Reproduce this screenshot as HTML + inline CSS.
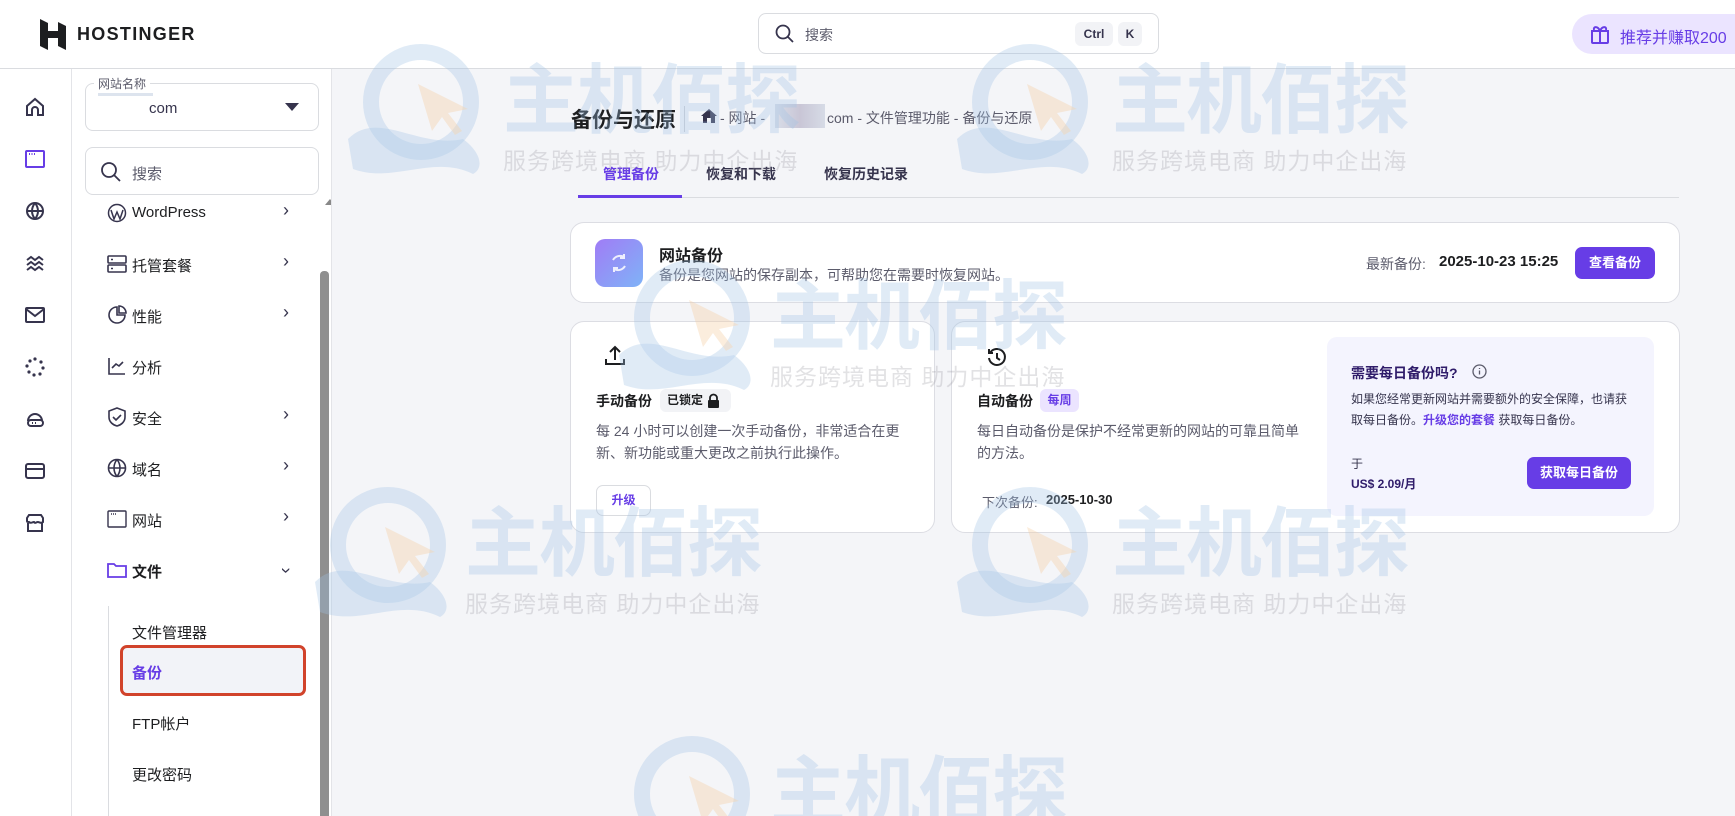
<!DOCTYPE html>
<html><head><meta charset="utf-8">
<style>
*{box-sizing:border-box;margin:0;padding:0}
html{width:1735px;height:816px;overflow:hidden;background:#f4f5f8}
body{width:1735px;height:816px;overflow:hidden;background:#f4f5f8;font-family:"Liberation Sans","Noto Sans CJK SC",sans-serif;color:#1d1e20;position:relative}
.abs{position:absolute}
.hdr{left:0;top:0;width:1735px;height:69px;background:#fff;border-bottom:1px solid #dadce0}
.rail{left:0;top:69px;width:72px;height:747px;background:#fff;border-right:1px solid #e3e4e8}
.panel{left:72px;top:69px;width:260px;height:747px;background:#fff;border-right:1px solid #e3e4e8;overflow:hidden}
.ri{position:absolute;left:22px;width:26px;height:26px}
.row{position:absolute;left:35px;width:220px;height:40px;font-size:15px;color:#1d1e20}
.row svg{position:absolute;left:0;top:9px}
.row .t{position:absolute;left:25px;top:10px}
.row .c{position:absolute;right:38px;top:6px;font-size:18px;color:#36344d}
.sub{position:absolute;left:60px;font-size:15px;color:#1d1e20}
.card{background:#fff;border:1px solid #dcdde3;border-radius:14px}
.g{color:#5b5b6b}
.btn{background:#673de6;color:#fff;font-weight:bold;font-size:13px;border-radius:7px;text-align:center}
.wmc{position:absolute;left:0;top:0;width:1735px;height:816px;overflow:hidden;pointer-events:none}
.wm{position:absolute;pointer-events:none;opacity:.8}
.wm .big{position:absolute;font-size:76px;font-weight:bold;color:rgba(160,195,230,.4);letter-spacing:-2px;white-space:nowrap;line-height:1}
.wm .sm{position:absolute;font-size:23px;color:rgba(140,140,150,.32);white-space:nowrap;letter-spacing:1px}
</style></head><body>

<div class="abs hdr"></div>
<svg class="abs" style="left:40px;top:19px" width="26" height="31" viewBox="0 0 26 31"><path d="M0 0l8 4v8l10 0V3l8 4v9H8l-8 0z" fill="#1d1e20"/><path d="M0 14l18 0v0l8 0v17l-8-4v-8H8v12l-8-4z" fill="#1d1e20"/></svg>
<div class="abs" style="left:77px;top:24px;font-size:18px;font-weight:bold;letter-spacing:1.3px;color:#1d1e20">HOSTINGER</div>
<div class="abs" style="left:758px;top:13px;width:401px;height:41px;border:1px solid #dadce0;border-radius:8px;background:#fff"></div>
<svg class="abs" style="left:775px;top:24px" width="20" height="20" viewBox="0 0 20 20"><circle cx="8" cy="8" r="6.5" fill="none" stroke="#36344d" stroke-width="1.8"/><path d="M13 13l5 5" stroke="#36344d" stroke-width="1.8"/></svg>
<div class="abs g" style="left:805px;top:25px;font-size:14px">搜索</div>
<div class="abs" style="left:1075px;top:22px;width:38px;height:24px;background:#f2f3f6;border-radius:6px;font-size:12px;font-weight:bold;text-align:center;line-height:24px;color:#36344d">Ctrl</div>
<div class="abs" style="left:1118px;top:22px;width:24px;height:24px;background:#f2f3f6;border-radius:6px;font-size:12px;font-weight:bold;text-align:center;line-height:24px;color:#36344d">K</div>
<div class="abs" style="left:1572px;top:14px;width:163px;height:40px;background:#ebe4ff;border-radius:20px 0 0 20px"></div>
<svg class="abs" style="left:1589px;top:23px" width="22" height="22" viewBox="0 0 22 22" fill="none" stroke="#673de6" stroke-width="2"><rect x="3" y="8" width="16" height="12" rx="1"/><path d="M2 8h18M11 8v12M11 8c-2-5-7-5-6-1M11 8c2-5 7-5 6-1"/></svg>
<div class="abs" style="left:1620px;top:24px;font-size:16px;color:#673de6;white-space:nowrap">推荐并赚取200</div>

<div class="abs rail">
<svg class="ri" style="top:25px" viewBox="0 0 26 26" fill="none" stroke="#36344d" stroke-width="2"><path d="M5 12l8-7 8 7v9H16v-5a3 3 0 0 0-6 0v5H5z"/></svg>
<svg class="ri" style="top:77px" viewBox="0 0 26 26" fill="none" stroke="#673de6" stroke-width="2"><rect x="4" y="5" width="18" height="16" rx="1"/><path d="M7 8h1M9.5 8h1M12 8h1"/></svg>
<svg class="ri" style="top:129px" viewBox="0 0 26 26" fill="none" stroke="#36344d" stroke-width="2"><circle cx="13" cy="13" r="8"/><path d="M5 13h16M13 5c-4 5-4 11 0 16M13 5c4 5 4 11 0 16"/></svg>
<svg class="ri" style="top:181px" viewBox="0 0 26 26" fill="none" stroke="#36344d" stroke-width="2"><path d="M5 10l4-3 4 3 4-3 4 3M5 15l4-3 4 3 4-3 4 3M5 20l4-3 4 3 4-3 4 3"/></svg>
<svg class="ri" style="top:233px" viewBox="0 0 26 26" fill="none" stroke="#36344d" stroke-width="2"><rect x="4" y="6" width="18" height="14" rx="1"/><path d="M4 7l9 7 9-7"/></svg>
<svg class="ri" style="top:285px" viewBox="0 0 26 26" fill="#36344d"><circle cx="13" cy="5" r="1.6"/><circle cx="19" cy="8" r="1.6"/><circle cx="21" cy="14" r="1.6"/><circle cx="18" cy="20" r="1.6"/><circle cx="12" cy="21" r="1.6"/><circle cx="7" cy="18" r="1.6"/><circle cx="5" cy="12" r="1.6"/><circle cx="8" cy="7" r="1.6"/></svg>
<svg class="ri" style="top:337px" viewBox="0 0 26 26" fill="none" stroke="#36344d" stroke-width="2"><path d="M6 15a7 7 0 0 1 14 0"/><rect x="6" y="14" width="15" height="6" rx="3"/><path d="M10 17h1M13 17h1"/></svg>
<svg class="ri" style="top:389px" viewBox="0 0 26 26" fill="none" stroke="#36344d" stroke-width="2"><rect x="4" y="6" width="18" height="14" rx="2"/><path d="M4 11h18"/></svg>
<svg class="ri" style="top:441px" viewBox="0 0 26 26" fill="none" stroke="#36344d" stroke-width="2"><path d="M5 8l2-3h12l2 3v4c-2 2-4 0-5 0-2 0-3 2-4 0-2 0-3 2-5 0-2 0-2 0-2-1zM6 13v8h14v-8"/></svg>
</div>

<div class="abs panel">
  <div class="abs" style="left:13px;top:14px;width:234px;height:48px;border:1px solid #dadce0;border-radius:8px"></div>
  <div class="abs g" style="left:22px;top:6px;font-size:12px;background:#fff;padding:0 4px">网站名称</div>
  <div class="abs" style="left:26px;top:24px;width:55px;height:3px;background:#dde4ee"></div>
  <div class="abs" style="left:77px;top:31px;font-size:15px;color:#36344d">com</div>
  <div class="abs" style="left:213px;top:34px;width:0;height:0;border-left:7px solid transparent;border-right:7px solid transparent;border-top:8px solid #36344d"></div>
  <div class="abs" style="left:13px;top:78px;width:234px;height:48px;border:1px solid #dadce0;border-radius:8px"></div>
  <svg class="abs" style="left:28px;top:92px" width="22" height="22" viewBox="0 0 22 22"><circle cx="9" cy="9" r="7" fill="none" stroke="#36344d" stroke-width="1.8"/><path d="M14 14l6 6" stroke="#36344d" stroke-width="1.8"/></svg>
  <div class="abs g" style="left:60px;top:94px;font-size:15px">搜索</div>
  <div class="abs" style="left:253px;top:130px;width:0;height:0;border-left:5px solid transparent;border-right:5px solid transparent;border-bottom:6px solid #888"></div>
  <div class="abs" style="left:248px;top:202px;width:9px;height:545px;background:#8f8f8f;border-radius:4px 4px 0 0"></div>

  <div class="row" style="top:125px"><svg width="20" height="20" viewBox="0 0 20 20" fill="none" stroke="#36344d" stroke-width="1.5"><circle cx="10" cy="10" r="8.5"/><path d="M4 7l3 9 3-7 3 7 3-9"/></svg><span class="t">WordPress</span><span class="c">›</span></div>
  <div class="row" style="top:176px"><svg width="20" height="20" viewBox="0 0 20 20" fill="none" stroke="#36344d" stroke-width="1.6"><rect x="1" y="2" width="18" height="7" rx="1"/><rect x="1" y="11" width="18" height="7" rx="1"/><path d="M4 5.5h2M4 14.5h2"/></svg><span class="t">托管套餐</span><span class="c">›</span></div>
  <div class="row" style="top:227px"><svg width="20" height="20" viewBox="0 0 20 20" fill="none" stroke="#36344d" stroke-width="1.6"><path d="M10 2a8 8 0 1 0 8 8h-8z"/><path d="M12 1a7 7 0 0 1 7 7h-7z"/></svg><span class="t">性能</span><span class="c">›</span></div>
  <div class="row" style="top:278px"><svg width="20" height="20" viewBox="0 0 20 20" fill="none" stroke="#36344d" stroke-width="1.6"><path d="M2 2v16h16M5 12l4-4 3 2 4-4"/></svg><span class="t">分析</span></div>
  <div class="row" style="top:329px"><svg width="20" height="20" viewBox="0 0 20 20" fill="none" stroke="#36344d" stroke-width="1.6"><path d="M10 1l8 3v6c0 5-4 8-8 9-4-1-8-4-8-9V4z"/><path d="M6 10l3 3 5-5"/></svg><span class="t">安全</span><span class="c">›</span></div>
  <div class="row" style="top:380px"><svg width="20" height="20" viewBox="0 0 20 20" fill="none" stroke="#36344d" stroke-width="1.6"><circle cx="10" cy="10" r="8.5"/><path d="M1.5 10h17M10 1.5c-4 5-4 12 0 17M10 1.5c4 5 4 12 0 17"/></svg><span class="t">域名</span><span class="c">›</span></div>
  <div class="row" style="top:431px"><svg width="20" height="20" viewBox="0 0 20 20" fill="none" stroke="#36344d" stroke-width="1.4"><rect x="1" y="2" width="18" height="16" rx="1"/><path d="M4 5h1M6 5h1M8 5h1"/></svg><span class="t">网站</span><span class="c">›</span></div>
  <div class="row" style="top:482px"><svg width="20" height="20" viewBox="0 0 20 20" fill="none" stroke="#673de6" stroke-width="1.8"><path d="M1 4h6l2 2h10v11H1z"/></svg><span class="t" style="font-weight:bold">文件</span><span class="c" style="transform:rotate(90deg);top:9px">›</span></div>
  <div class="abs" style="left:36px;top:537px;width:1px;height:210px;background:#dadce0"></div>
  <div class="sub" style="top:553px">文件管理器</div>
  <div class="abs" style="left:48px;top:576px;width:186px;height:51px;border:3px solid #d1432b;border-radius:7px;background:#f2f3f8"></div>
  <div class="sub" style="top:593px;color:#673de6;font-weight:bold">备份</div>
  <div class="sub" style="top:644px">FTP帐户</div>
  <div class="sub" style="top:695px">更改密码</div>
</div>

<div class="abs" style="left:571px;top:104px;font-size:21px;font-weight:bold">备份与还原</div>
<div class="abs" style="left:684px;top:106px;width:1px;height:26px;background:#cfd0d6"></div>
<svg class="abs" style="left:701px;top:109px" width="16" height="14" viewBox="0 0 16 14"><path d="M8 0l8 7h-2v7H10V9H6v5H2V7H0z" fill="#36344d"/></svg>
<div class="abs g" style="left:720px;top:108px;font-size:14px;white-space:nowrap">- 网站 -</div>
<div class="abs" style="left:775px;top:104px;width:50px;height:24px;background:linear-gradient(90deg,#d8dde8,#c9c6d6 50%,#d6dbe6)"></div>
<div class="abs g" style="left:827px;top:108px;font-size:14px;white-space:nowrap">com - 文件管理功能 - 备份与还原</div>

<div class="abs" style="left:603px;top:164px;font-size:14px;font-weight:bold;color:#673de6">管理备份</div>
<div class="abs" style="left:706px;top:164px;font-size:14px;font-weight:bold;color:#36344d">恢复和下载</div>
<div class="abs" style="left:824px;top:164px;font-size:14px;font-weight:bold;color:#36344d">恢复历史记录</div>
<div class="abs" style="left:578px;top:197px;width:1101px;height:1px;background:#dadce0"></div>
<div class="abs" style="left:578px;top:195px;width:104px;height:3px;background:#673de6"></div>

<div class="abs card" style="left:570px;top:222px;width:1110px;height:81px"></div>
<div class="abs" style="left:595px;top:239px;width:48px;height:48px;border-radius:10px;background:linear-gradient(135deg,#a07cf6,#7fb3f7)"></div>
<svg class="abs" style="left:607px;top:251px" width="24" height="24" viewBox="0 0 24 24" fill="none" stroke="#fff" stroke-width="2" opacity=".85"><path d="M17 6a8 8 0 0 0-11 3M7 18a8 8 0 0 0 11-3M17 3v4h-4M7 21v-4h4"/></svg>
<div class="abs" style="left:659px;top:242px;font-size:16px;font-weight:bold">网站备份</div>
<div class="abs g" style="left:659px;top:265px;font-size:14px">备份是您网站的保存副本，可帮助您在需要时恢复网站。</div>
<div class="abs g" style="left:1366px;top:254px;font-size:14px">最新备份:</div>
<div class="abs" style="left:1439px;top:253px;font-size:15px;font-weight:bold">2025-10-23 15:25</div>
<div class="abs btn" style="left:1575px;top:247px;width:80px;height:32px;line-height:32px">查看备份</div>

<div class="abs card" style="left:570px;top:321px;width:365px;height:212px"></div>
<svg class="abs" style="left:603px;top:344px" width="24" height="24" viewBox="0 0 24 24" fill="none" stroke="#1d1e20" stroke-width="2"><path d="M12 16V3M7 8l5-5 5 5M3 15v5h18v-5"/></svg>
<div class="abs" style="left:596px;top:391px;font-size:14px;font-weight:bold">手动备份</div>
<div class="abs" style="left:660px;top:389px;width:71px;height:23px;background:#f2f3f6;border-radius:6px;font-size:12px;font-weight:bold;line-height:23px;padding-left:7px">已锁定</div>
<svg class="abs" style="left:707px;top:393px" width="13" height="15" viewBox="0 0 13 15"><path d="M3 7V5a3.5 3.5 0 0 1 7 0v2" fill="none" stroke="#1d1e20" stroke-width="1.8"/><rect x="1" y="7" width="11" height="8" rx="1" fill="#1d1e20"/></svg>
<div class="abs g" style="left:596px;top:420px;width:320px;font-size:14px;line-height:22px">每 24 小时可以创建一次手动备份，非常适合在更新、新功能或重大更改之前执行此操作。</div>
<div class="abs" style="left:596px;top:485px;width:55px;height:31px;border:1px solid #dadce0;border-radius:7px;font-size:12px;font-weight:bold;color:#673de6;text-align:center;line-height:29px">升级</div>

<div class="abs card" style="left:951px;top:321px;width:729px;height:212px"></div>
<svg class="abs" style="left:985px;top:345px" width="24" height="24" viewBox="0 0 24 24" fill="none" stroke="#1d1e20" stroke-width="2"><path d="M5 8a8 8 0 1 1-1 5M4 4v4h4M12 8v5l3 2"/></svg>
<div class="abs" style="left:977px;top:391px;font-size:14px;font-weight:bold">自动备份</div>
<div class="abs" style="left:1040px;top:389px;width:39px;height:23px;background:#ebe4ff;border-radius:6px;font-size:12px;font-weight:bold;color:#673de6;text-align:center;line-height:23px">每周</div>
<div class="abs g" style="left:977px;top:420px;width:330px;font-size:14px;line-height:22px">每日自动备份是保护不经常更新的网站的可靠且简单的方法。</div>
<div class="abs g" style="left:982px;top:492px;font-size:13px">下次备份:</div>
<div class="abs" style="left:1046px;top:492px;font-size:13px;font-weight:bold">2025-10-30</div>

<div class="abs" style="left:1327px;top:337px;width:327px;height:179px;background:#f4f4fe;border-radius:10px"></div>
<div class="abs" style="left:1351px;top:363px;font-size:14px;font-weight:bold;color:#2f1c6a">需要每日备份吗?</div>
<svg class="abs" style="left:1472px;top:364px" width="15" height="15" viewBox="0 0 15 15" fill="none" stroke="#5b5b6b" stroke-width="1.3"><circle cx="7.5" cy="7.5" r="6.5"/><path d="M7.5 6.5v4M7.5 4v1"/></svg>
<div class="abs" style="left:1351px;top:389px;width:280px;font-size:12px;line-height:21px;color:#36344d">如果您经常更新网站并需要额外的安全保障，也请获取每日备份。<b style="color:#673de6">升级您的套餐</b> 获取每日备份。</div>
<div class="abs" style="left:1351px;top:455px;font-size:12px;color:#36344d">于</div>
<div class="abs" style="left:1351px;top:475px;font-size:12px;font-weight:bold;color:#2f1c6a">US$ 2.09/月</div>
<div class="abs btn" style="left:1527px;top:457px;width:104px;height:32px;line-height:32px">获取每日备份</div>

<div class="wmc">
<div class="wm" style="left:343px;top:44px"><svg width="160" height="130" viewBox="0 0 160 130"><circle cx="78" cy="58" r="50" fill="none" stroke="rgba(160,195,230,.4)" stroke-width="16"/><path d="M5 95c30-30 70 10 115 0 20 15 20 30 10 35-40-20-80 10-120-5z" fill="rgba(160,195,230,.4)"/><path d="M75 40l50 25-20 4 14 18-7 4-13-18-10 14z" fill="rgba(245,205,160,.45)"/></svg><div class="big" style="left:160px;top:20px">主机佰探</div><div class="sm" style="left:160px;top:98px">服务跨境电商 助力中企出海</div></div>
<div class="wm" style="left:952px;top:44px"><svg width="160" height="130" viewBox="0 0 160 130"><circle cx="78" cy="58" r="50" fill="none" stroke="rgba(160,195,230,.4)" stroke-width="16"/><path d="M5 95c30-30 70 10 115 0 20 15 20 30 10 35-40-20-80 10-120-5z" fill="rgba(160,195,230,.4)"/><path d="M75 40l50 25-20 4 14 18-7 4-13-18-10 14z" fill="rgba(245,205,160,.45)"/></svg><div class="big" style="left:160px;top:20px">主机佰探</div><div class="sm" style="left:160px;top:98px">服务跨境电商 助力中企出海</div></div>
<div class="wm" style="left:614px;top:260px"><svg width="160" height="130" viewBox="0 0 160 130"><circle cx="78" cy="58" r="50" fill="none" stroke="rgba(160,195,230,.4)" stroke-width="16"/><path d="M5 95c30-30 70 10 115 0 20 15 20 30 10 35-40-20-80 10-120-5z" fill="rgba(160,195,230,.4)"/><path d="M75 40l50 25-20 4 14 18-7 4-13-18-10 14z" fill="rgba(245,205,160,.45)"/></svg><div class="big" style="left:156px;top:20px">主机佰探</div><div class="sm" style="left:156px;top:98px">服务跨境电商 助力中企出海</div></div>
<div class="wm" style="left:310px;top:487px"><svg width="160" height="130" viewBox="0 0 160 130"><circle cx="78" cy="58" r="50" fill="none" stroke="rgba(160,195,230,.4)" stroke-width="16"/><path d="M5 95c30-30 70 10 115 0 20 15 20 30 10 35-40-20-80 10-120-5z" fill="rgba(160,195,230,.4)"/><path d="M75 40l50 25-20 4 14 18-7 4-13-18-10 14z" fill="rgba(245,205,160,.45)"/></svg><div class="big" style="left:155px;top:20px">主机佰探</div><div class="sm" style="left:155px;top:98px">服务跨境电商 助力中企出海</div></div>
<div class="wm" style="left:952px;top:487px"><svg width="160" height="130" viewBox="0 0 160 130"><circle cx="78" cy="58" r="50" fill="none" stroke="rgba(160,195,230,.4)" stroke-width="16"/><path d="M5 95c30-30 70 10 115 0 20 15 20 30 10 35-40-20-80 10-120-5z" fill="rgba(160,195,230,.4)"/><path d="M75 40l50 25-20 4 14 18-7 4-13-18-10 14z" fill="rgba(245,205,160,.45)"/></svg><div class="big" style="left:160px;top:20px">主机佰探</div><div class="sm" style="left:160px;top:98px">服务跨境电商 助力中企出海</div></div>
<div class="wm" style="left:614px;top:736px;height:80px;width:480px;overflow:hidden"><svg width="160" height="80" viewBox="0 0 160 80"><circle cx="78" cy="58" r="50" fill="none" stroke="rgba(160,195,230,.4)" stroke-width="16"/><path d="M75 40l50 25-20 4 14 18-7 4-13-18-10 14z" fill="rgba(245,205,160,.45)"/></svg><div class="big" style="left:156px;top:20px">主机佰探</div></div>
</div>
</body></html>
